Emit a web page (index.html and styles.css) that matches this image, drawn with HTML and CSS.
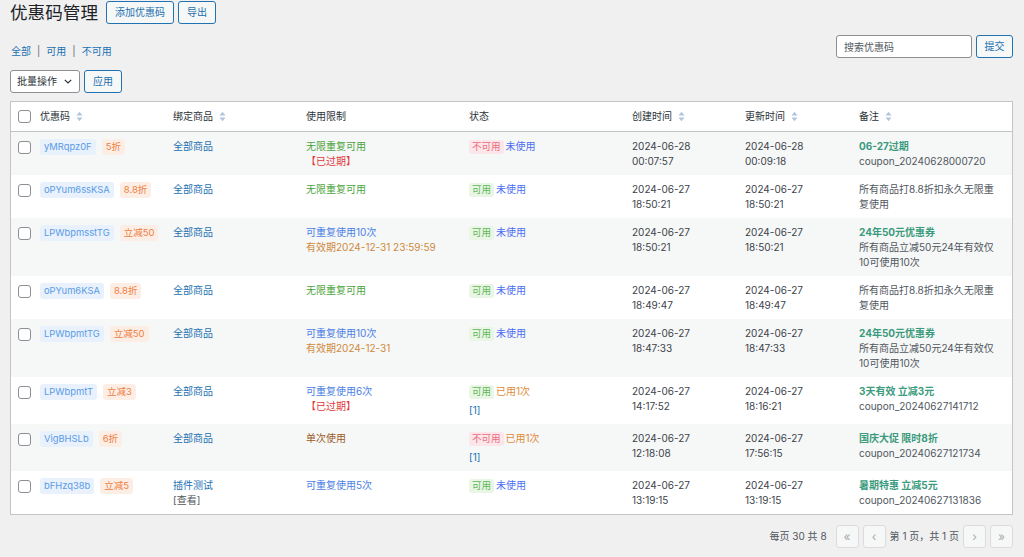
FILE: index.html
```html
<!DOCTYPE html>
<html lang="zh-CN">
<head>
<meta charset="utf-8">
<title>优惠码管理</title>
<link rel="stylesheet" href="styles.css">
</head>
<body>
<div class="wrap">
  <div class="page-head">
    <h1 class="page-title">优惠码管理</h1>
    <div class="head-actions">
      <a class="btn">添加优惠码</a>
      <a class="btn">导出</a>
    </div>
  </div>

  <div class="toolbar-top">
    <ul class="subsubsub">
      <li><a>全部</a><span class="sep">|</span></li>
      <li><a>可用</a><span class="sep">|</span></li>
      <li><a>不可用</a></li>
    </ul>
    <div class="search-box">
      <input class="search-input" type="text" placeholder="搜索优惠码">
      <a class="btn">提交</a>
    </div>
  </div>

  <div class="bulk-row">
    <div class="select">
      <span>批量操作</span>
      <svg class="chev" width="8" height="5" viewBox="0 0 8 5"><path d="M0.8 0.8 L4 4 L7.2 0.8" fill="none" stroke="#2c3338" stroke-width="1.2"/></svg>
    </div>
    <a class="btn">应用</a>
  </div>

  <table class="list">
    <colgroup>
      <col class="c-cb"><col class="c-code"><col class="c-prod"><col class="c-limit"><col class="c-status"><col class="c-created"><col class="c-updated"><col class="c-note">
    </colgroup>
    <thead>
      <tr>
        <th class="cb"><span class="checkbox"></span></th>
        <th>优惠码<svg class="sort" width="7" height="11" viewBox="0 0 7 11"><path d="M0.5 4.5 L3.5 0.8 L6.5 4.5 Z M0.5 6.5 L3.5 10.2 L6.5 6.5 Z" fill="#b3c5dd"/></svg></th>
        <th>绑定商品<svg class="sort" width="7" height="11" viewBox="0 0 7 11"><path d="M0.5 4.5 L3.5 0.8 L6.5 4.5 Z M0.5 6.5 L3.5 10.2 L6.5 6.5 Z" fill="#b3c5dd"/></svg></th>
        <th>使用限制</th>
        <th>状态</th>
        <th>创建时间<svg class="sort" width="7" height="11" viewBox="0 0 7 11"><path d="M0.5 4.5 L3.5 0.8 L6.5 4.5 Z M0.5 6.5 L3.5 10.2 L6.5 6.5 Z" fill="#b3c5dd"/></svg></th>
        <th>更新时间<svg class="sort" width="7" height="11" viewBox="0 0 7 11"><path d="M0.5 4.5 L3.5 0.8 L6.5 4.5 Z M0.5 6.5 L3.5 10.2 L6.5 6.5 Z" fill="#b3c5dd"/></svg></th>
        <th>备注<svg class="sort" width="7" height="11" viewBox="0 0 7 11"><path d="M0.5 4.5 L3.5 0.8 L6.5 4.5 Z M0.5 6.5 L3.5 10.2 L6.5 6.5 Z" fill="#b3c5dd"/></svg></th>
      </tr>
    </thead>
    <tbody>
      <tr class="alt">
        <td class="cb"><span class="checkbox"></span></td>
        <td class="codes"><span class="code">yMRqpz0F</span><span class="disc">5折</span></td>
        <td><a class="link">全部商品</a></td>
        <td><span class="t-green">无限重复可用</span><br><span class="t-red">【已过期】</span></td>
        <td><span class="badge bad">不可用</span><span class="t-blue">未使用</span></td>
        <td>2024-06-28<br>00:07:57</td>
        <td>2024-06-28<br>00:09:18</td>
        <td class="note"><strong>06-27过期</strong><br>coupon_20240628000720</td>
      </tr>
      <tr>
        <td class="cb"><span class="checkbox"></span></td>
        <td class="codes"><span class="code">oPYum6ssKSA</span><span class="disc">8.8折</span></td>
        <td><a class="link">全部商品</a></td>
        <td><span class="t-green">无限重复可用</span></td>
        <td><span class="badge ok">可用</span><span class="t-blue">未使用</span></td>
        <td>2024-06-27<br>18:50:21</td>
        <td>2024-06-27<br>18:50:21</td>
        <td class="note">所有商品打8.8折扣永久无限重复使用</td>
      </tr>
      <tr class="alt">
        <td class="cb"><span class="checkbox"></span></td>
        <td class="codes"><span class="code">LPWbpmsstTG</span><span class="disc">立减50</span></td>
        <td><a class="link">全部商品</a></td>
        <td><span class="t-lblue">可重复使用10次</span><br><span class="t-orange">有效期2024-12-31 23:59:59</span></td>
        <td><span class="badge ok">可用</span><span class="t-blue">未使用</span></td>
        <td>2024-06-27<br>18:50:21</td>
        <td>2024-06-27<br>18:50:21</td>
        <td class="note"><strong>24年50元优惠券</strong><br>所有商品立减50元24年有效仅10可使用10次</td>
      </tr>
      <tr>
        <td class="cb"><span class="checkbox"></span></td>
        <td class="codes"><span class="code">oPYum6KSA</span><span class="disc">8.8折</span></td>
        <td><a class="link">全部商品</a></td>
        <td><span class="t-green">无限重复可用</span></td>
        <td><span class="badge ok">可用</span><span class="t-blue">未使用</span></td>
        <td>2024-06-27<br>18:49:47</td>
        <td>2024-06-27<br>18:49:47</td>
        <td class="note">所有商品打8.8折扣永久无限重复使用</td>
      </tr>
      <tr class="alt">
        <td class="cb"><span class="checkbox"></span></td>
        <td class="codes"><span class="code">LPWbpmtTG</span><span class="disc">立减50</span></td>
        <td><a class="link">全部商品</a></td>
        <td><span class="t-lblue">可重复使用10次</span><br><span class="t-orange">有效期2024-12-31</span></td>
        <td><span class="badge ok">可用</span><span class="t-blue">未使用</span></td>
        <td>2024-06-27<br>18:47:33</td>
        <td>2024-06-27<br>18:47:33</td>
        <td class="note"><strong>24年50元优惠券</strong><br>所有商品立减50元24年有效仅10可使用10次</td>
      </tr>
      <tr>
        <td class="cb"><span class="checkbox"></span></td>
        <td class="codes"><span class="code">LPWbpmtT</span><span class="disc">立减3</span></td>
        <td><a class="link">全部商品</a></td>
        <td><span class="t-lblue">可重复使用6次</span><br><span class="t-red">【已过期】</span></td>
        <td><span class="badge ok">可用</span><span class="t-used">已用1次</span><a class="link used-link">[1]</a></td>
        <td>2024-06-27<br>14:17:52</td>
        <td>2024-06-27<br>18:16:21</td>
        <td class="note"><strong>3天有效 立减3元</strong><br>coupon_20240627141712</td>
      </tr>
      <tr class="alt">
        <td class="cb"><span class="checkbox"></span></td>
        <td class="codes"><span class="code">VigBHSLb</span><span class="disc">6折</span></td>
        <td><a class="link">全部商品</a></td>
        <td><span class="t-brown">单次使用</span></td>
        <td><span class="badge bad">不可用</span><span class="t-used">已用1次</span><a class="link used-link">[1]</a></td>
        <td>2024-06-27<br>12:18:08</td>
        <td>2024-06-27<br>17:56:15</td>
        <td class="note"><strong>国庆大促 限时8折</strong><br>coupon_20240627121734</td>
      </tr>
      <tr>
        <td class="cb"><span class="checkbox"></span></td>
        <td class="codes"><span class="code">bFHzq38b</span><span class="disc">立减5</span></td>
        <td><a class="link">插件测试</a><br><span class="muted">[查看]</span></td>
        <td><span class="t-lblue">可重复使用5次</span></td>
        <td><span class="badge ok">可用</span><span class="t-blue">未使用</span></td>
        <td>2024-06-27<br>13:19:15</td>
        <td>2024-06-27<br>13:19:15</td>
        <td class="note"><strong>暑期特惠 立减5元</strong><br>coupon_20240627131836</td>
      </tr>
    </tbody>
  </table>

  <div class="tablenav-bottom">
    <span class="count">每页 30 共 8</span>
    <span class="pg-btn">«</span>
    <span class="pg-btn">‹</span>
    <span class="pg-text">第 1 页，共 1 页</span>
    <span class="pg-btn">›</span>
    <span class="pg-btn">»</span>
  </div>
</div>
</body>
</html>
```

FILE: styles.css
```css
* { box-sizing: border-box; }
html, body { margin: 0; padding: 0; }
body {
  background: #f0f0f1;
  font-family: Inter, "Noto Sans CJK SC", sans-serif;
  font-size: 10px;
  color: #3c434a;
  line-height: 15px;
}
.wrap { padding: 0 11px 0 10px; }

.page-head { display: flex; align-items: center; height: 25px; }
.page-title {
  margin: 0;
  font-size: 17.6px;
  font-weight: 400;
  line-height: 24px;
  color: #1d2327;
}
.head-actions { display: flex; gap: 4px; margin-left: 8px; }

.btn {
  display: inline-block;
  height: 23px;
  padding: 0 8px;
  border: 1px solid #2271b1;
  border-radius: 3px;
  background: #f6f7f7;
  color: #2271b1;
  font-size: 10px;
  line-height: 21px;
  white-space: nowrap;
  cursor: pointer;
}

.toolbar-top {
  display: flex;
  justify-content: space-between;
  align-items: flex-start;
  margin-top: 10px;
  height: 23px;
}
.subsubsub {
  list-style: none;
  margin: 0;
  padding: 9px 0 0 1px;
  display: flex;
  color: #2271b1;
}
.subsubsub a { color: #2271b1; }
.subsubsub .sep { color: #646970; margin: 0 6px; }
.search-box { display: flex; gap: 4px; }
.search-input {
  width: 136px;
  height: 23px;
  border: 1px solid #8c8f94;
  border-radius: 3px;
  background: #fff;
  padding: 0 7px;
  font-family: inherit;
  font-size: 10px;
  color: #2c3338;
  outline: none;
}
.search-input::placeholder { color: #50575e; }
.search-box .btn { width: 37px; padding: 0; text-align: center; }

.bulk-row { display: flex; gap: 4px; margin-top: 12px; }
.select {
  width: 70px;
  height: 23px;
  border: 1px solid #8c8f94;
  border-radius: 3px;
  background: #fff;
  display: flex;
  align-items: center;
  justify-content: space-between;
  padding: 0 7px 0 6px;
  color: #2c3338;
}
.chev { display: block; }

.list {
  margin-top: 8px;
  width: 1003px;
  table-layout: fixed;
  border-collapse: separate;
  border-spacing: 0;
  border: 1px solid #c3c4c7;
  background: #fff;
}
.c-cb { width: 21px; }
.c-code { width: 133px; }
.c-prod { width: 133px; }
.c-limit { width: 163px; }
.c-status { width: 163px; }
.c-created { width: 113px; }
.c-updated { width: 114px; }
.c-note { width: 161px; }

.list th {
  text-align: left;
  font-weight: 400;
  color: #2c3338;
  padding: 7px 8px;
  line-height: 15px;
  border-bottom: 1px solid #c3c4c7;
  white-space: nowrap;
}
.sort { display: inline-block; vertical-align: -2px; margin-left: 6px; }
.list td {
  padding: 6.5px 8px;
  vertical-align: top;
  line-height: 15px;
}
.list th.cb, .list td.cb { padding-left: 7px; padding-right: 0; }
.list tr.alt td { background: #f6f7f7; }
.list td.note { padding-right: 12px; }
.list td.codes { white-space: nowrap; padding-right: 0; }

.checkbox {
  display: inline-block;
  width: 13px;
  height: 13px;
  border: 1px solid #8c8f94;
  border-radius: 3px;
  background: #fff;
  vertical-align: -3px;
}
.list td.cb .checkbox { margin-top: 2px; vertical-align: top; }

.code {
  display: inline-block;
  background: #e8f1fc;
  color: #5a9be6;
  font-size: 9.4px;
  line-height: 16px;
  padding: 0 4px;
  border-radius: 3px;
  vertical-align: top;
}
.disc {
  display: inline-block;
  margin-left: 6px;
  background: #fdeee5;
  color: #ef7d3e;
  font-size: 9.5px;
  line-height: 16px;
  padding: 0 4px;
  border-radius: 3px;
  vertical-align: top;
}
.link { color: #2271b1; }
.muted { color: #50575e; }
.t-green { color: #4aa43c; }
.t-red { color: #e03a3a; }
.t-lblue { color: #4a7ee6; }
.t-orange { color: #cf8a3c; }
.t-brown { color: #9b5c25; }
.t-blue { color: #4a6cf4; }
.t-used { color: #df8a3a; }

.badge {
  display: inline-block;
  font-size: 9.5px;
  line-height: 14px;
  padding: 0 3px;
  border-radius: 3px;
  margin-right: 2px;
  vertical-align: 0;
}
.badge.ok { background: #e9f6e5; color: #5eb654; }
.badge.bad { background: #fce6ea; color: #ea6c7e; }
.used-link { display: block; margin-top: 4px; }

.note { color: #50575e; }
.note strong { color: #3a9b7d; font-weight: 700; }

.tablenav-bottom {
  display: flex;
  justify-content: flex-end;
  align-items: center;
  gap: 4px;
  margin-top: 10px;
  color: #50575e;
}
.count { margin-right: 5px; }
.pg-btn {
  width: 23px;
  height: 23px;
  border: 1px solid #dcdcde;
  border-radius: 3px;
  background: #f6f7f7;
  color: #a7aaad;
  font-size: 12px;
  display: flex;
  align-items: center;
  justify-content: center;
}
.pg-text { color: #50575e; }
```
